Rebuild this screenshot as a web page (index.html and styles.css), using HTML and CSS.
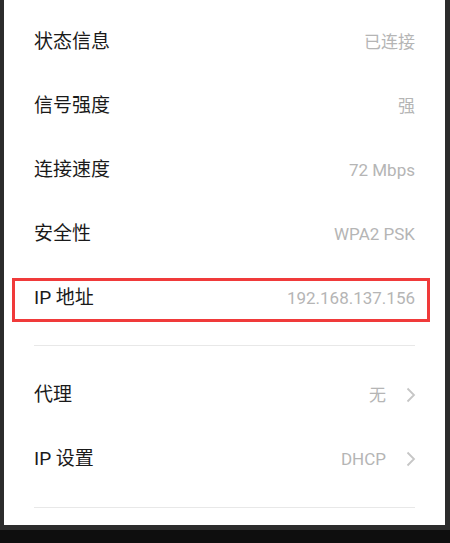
FILE: index.html
```html
<!DOCTYPE html>
<html lang="zh-CN">
<head>
<meta charset="utf-8">
<link rel="stylesheet" href="styles.css">
</head>
<body>
<div class="frame">
  <div class="panel">
    <div class="section">
      <div class="row"><span class="label">状态信息</span><span class="value">已连接</span></div>
      <div class="row"><span class="label">信号强度</span><span class="value">强</span></div>
      <div class="row"><span class="label">连接速度</span><span class="value">72 Mbps</span></div>
      <div class="row"><span class="label">安全性</span><span class="value">WPA2 PSK</span></div>
      <div class="row row-marked"><span class="label">IP 地址</span><span class="value">192.168.137.156</span><div class="mark"></div></div>
    </div>
    <div class="divider"></div>
    <div class="section">
      <div class="row"><span class="label">代理</span><span class="value">无</span><svg class="chev" width="10" height="16" viewBox="0 0 10 16"><path d="M1.5 1.5 L8 8 L1.5 14.5" fill="none" stroke="#c6c6c6" stroke-width="1.8"/></svg></div>
      <div class="row"><span class="label">IP 设置</span><span class="value">DHCP</span><svg class="chev" width="10" height="16" viewBox="0 0 10 16"><path d="M1.5 1.5 L8 8 L1.5 14.5" fill="none" stroke="#c6c6c6" stroke-width="1.8"/></svg></div>
    </div>
    <div class="divider divider-last"></div>
  </div>
</div>
</body>
</html>
```
FILE: styles.css
```css
* { box-sizing: border-box; }
html, body { margin: 0; padding: 0; }
body {
  width: 450px;
  height: 543px;
  background: #0e0e0e;
  font-family: Roboto, "Noto Sans CJK SC", sans-serif;
  overflow: hidden;
}
.frame {
  height: 530px;
  background: #2c2c2c;
  padding: 0 5px 5px 4px;
}
.panel {
  height: 525px;
  background: #ffffff;
  padding: 10px 0 0;
  overflow: hidden;
}
.row {
  position: relative;
  height: 64px;
  display: flex;
  align-items: center;
  padding: 0 30px 0 30px;
}
.label {
  flex: 1;
  font-size: 19px;
  line-height: 24px;
  color: #1a1a1a;
}
.value {
  font-size: 17px;
  line-height: 24px;
  color: #b5b5b5;
}
.chev {
  margin-left: 20px;
  margin-right: -1px;
}
.divider {
  height: 1px;
  background: #e8e8e8;
  margin: 15px 30px 17px 30px;
}
.divider-last {
  margin-top: 16px;
}
.mark {
  position: absolute;
  left: 8px;
  right: 15px;
  top: 12px;
  height: 44px;
  border: 3px solid #f03a3a;
}
```
